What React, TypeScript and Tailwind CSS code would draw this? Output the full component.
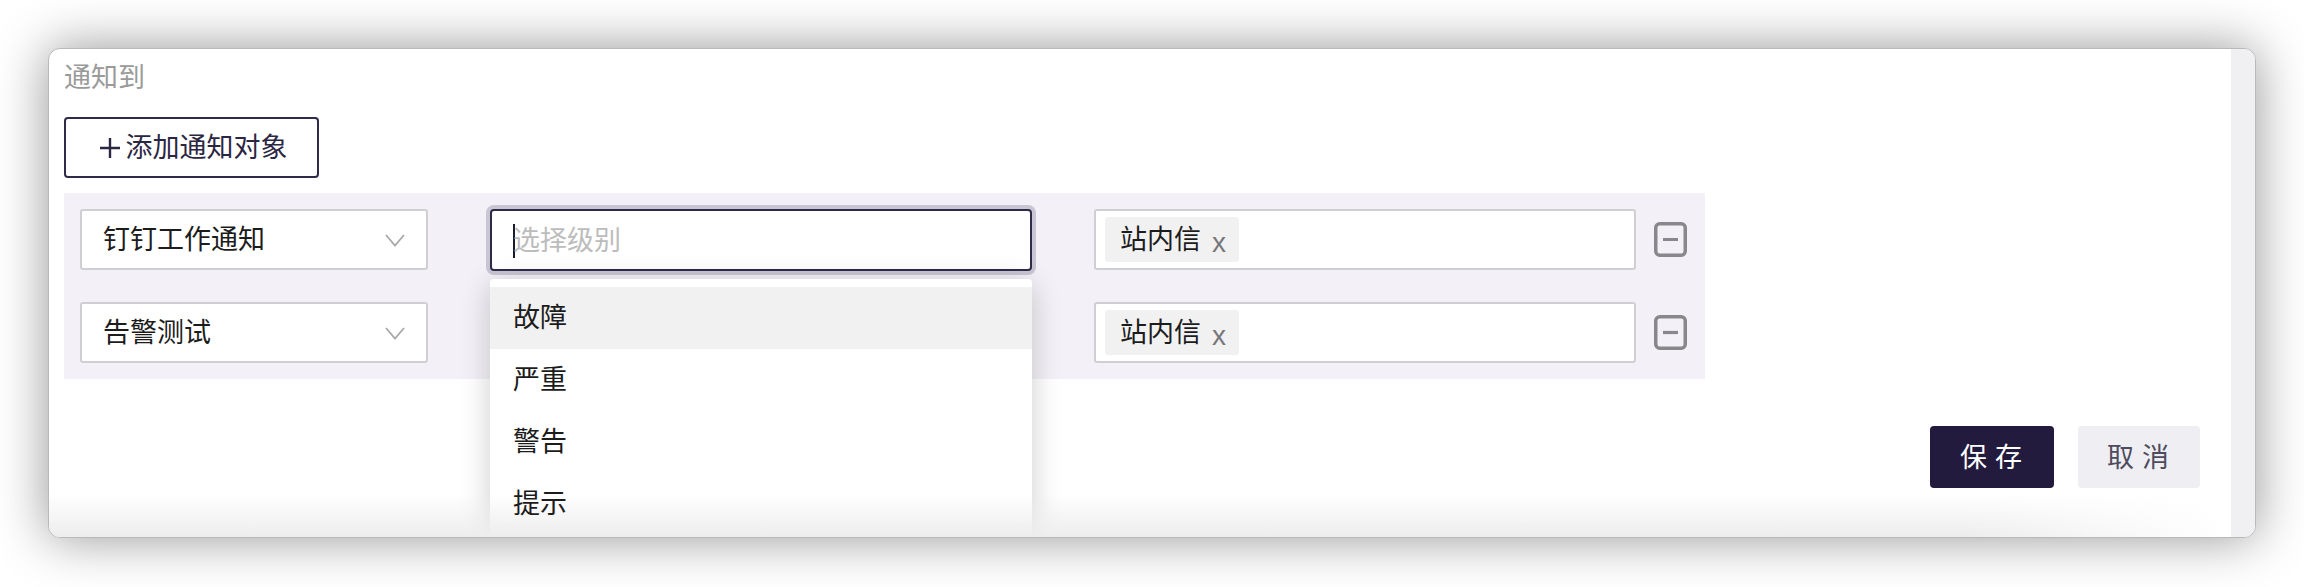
const font = { fontFamily: '"Liberation Sans", "Noto Sans CJK SC", sans-serif' };

function Chevron() {
  return (
    <svg width="20" height="13" viewBox="0 0 20 13" fill="none" className="shrink-0">
      <path d="M1 1l9 10.5L19 1" stroke="#a9a9a9" strokeWidth="1.8" />
    </svg>
  );
}

function Minus() {
  return (
    <svg width="33" height="35" viewBox="0 0 33 35" fill="none" className="shrink-0">
      <rect x="1.75" y="1.75" width="29.5" height="31.5" rx="4" stroke="#88888c" strokeWidth="3.5" />
      <path d="M9 17.5h15" stroke="#88888c" strokeWidth="3.2" />
    </svg>
  );
}

function TypeSelect({ label }: { label: string }) {
  return (
    <div className="flex h-[61px] w-[348px] shrink-0 items-center justify-between rounded-[3px] border-2 border-[#cfcfd3] bg-white pl-[21px] pr-[21px] pt-[2px] text-[27px] text-[#1c1c1c]">
      <span>{label}</span>
      <Chevron />
    </div>
  );
}

function TagSelect() {
  return (
    <div className="flex h-[61px] w-[542px] shrink-0 items-center rounded-[3px] border-2 border-[#cfcfd3] bg-white pl-[9px]">
      <div className="flex h-[45px] w-[134px] items-center rounded-[3px] bg-[#f1f1f2] pl-[15px] pt-[2px] text-[27px] text-[#1c1c1c]">
        <span>站内信</span>
        <span className="ml-[11px] mt-[4px] text-[28px] font-light leading-none text-[#77777a]">x</span>
      </div>
    </div>
  );
}

export default function App() {
  return (
    <div className="h-[587px] w-[2304px] overflow-hidden bg-white pl-12 pt-12" style={font}>
      <div className="relative flex h-[490px] w-[2208px] overflow-hidden rounded-[12px] border border-[#b9b9bb] bg-white shadow-[0_0_52px_rgba(0,0,0,0.42)]">
        <div className="flex flex-1 flex-col pl-[15px] pr-[31px]">
          <div className="pt-[13px] text-[27px] leading-[32px] text-[#9a9a9a]">通知到</div>
          <button className="mt-[23px] flex h-[61px] w-[255px] items-center justify-center rounded-[4px] border-2 border-[#2f2a48] bg-white pl-[3px] pt-[1px] text-[27px] text-[#2b2642]">
            <svg width="22" height="22" viewBox="0 0 22 22" fill="none" className="mr-[5px]">
              <path d="M11 1v20M1 11h20" stroke="#2b2642" strokeWidth="2.4" />
            </svg>
            添加通知对象
          </button>
          <div className="relative mt-[15px] flex w-[1641px] flex-col gap-[32px] bg-[#f3f1f7] px-[16px] py-[16px]">
            <div className="flex items-center">
              <TypeSelect label="钉钉工作通知" />
              <div className="relative ml-[62px] h-[61px] w-[542px] shrink-0">
                <div className="flex h-[62px] items-center rounded-[4px] border-2 border-[#2f2a48] bg-white pl-[21px] pt-[2px] text-[27px] text-[#bcbcbc] shadow-[0_0_0_4px_#c9c6d4]">
                  <span className="mr-[-2px] h-[34px] w-[2px] bg-[#1b1b2a]" />
                  <span>选择级别</span>
                </div>
              </div>
              <div className="ml-[62px]">
                <TagSelect />
              </div>
              <div className="ml-[18px]">
                <Minus />
              </div>
            </div>
            <div className="flex items-center">
              <TypeSelect label="告警测试" />
              <div className="ml-[62px] h-[61px] w-[542px] shrink-0 rounded-[3px] border-2 border-[#cfcfd3] bg-white" />
              <div className="ml-[62px]">
                <TagSelect />
              </div>
              <div className="ml-[18px]">
                <Minus />
              </div>
            </div>
            <div className="absolute left-[426px] top-[86px] h-[300px] w-[542px] rounded-[4px] bg-white pt-[8px] text-[27px] text-[#1c1c1c] shadow-[0_6px_30px_rgba(0,0,0,0.2)]">
              <div className="flex h-[62px] items-center bg-[#f1f1f1] pl-[23px]">故障</div>
              <div className="flex h-[62px] items-center pl-[23px]">严重</div>
              <div className="flex h-[62px] items-center pl-[23px]">警告</div>
              <div className="flex h-[62px] items-center pl-[23px]">
                <span className="relative z-30">提示</span>
              </div>
            </div>
          </div>
          <div className="mt-[47px] flex justify-end gap-[24px] text-[27px]">
            <button className="flex h-[62px] w-[124px] items-center justify-center rounded-[4px] bg-[#221b3d] pl-[6px] pt-[2px] tracking-[8px] text-white">
              保存
            </button>
            <button className="flex h-[62px] w-[122px] items-center justify-center rounded-[4px] bg-[#efeff3] pl-[6px] pt-[2px] tracking-[8px] text-[#4e4b5e]">
              取消
            </button>
          </div>
        </div>
        <div className="w-[24px] shrink-0 bg-[#f0f0f2]" />
        <div className="pointer-events-none absolute bottom-0 left-0 z-20 h-[44px] w-[2180px] bg-gradient-to-t from-[#ededed] to-transparent [mask-image:linear-gradient(to_right,black_88%,transparent_100%)]" />
      </div>
    </div>
  );
}
